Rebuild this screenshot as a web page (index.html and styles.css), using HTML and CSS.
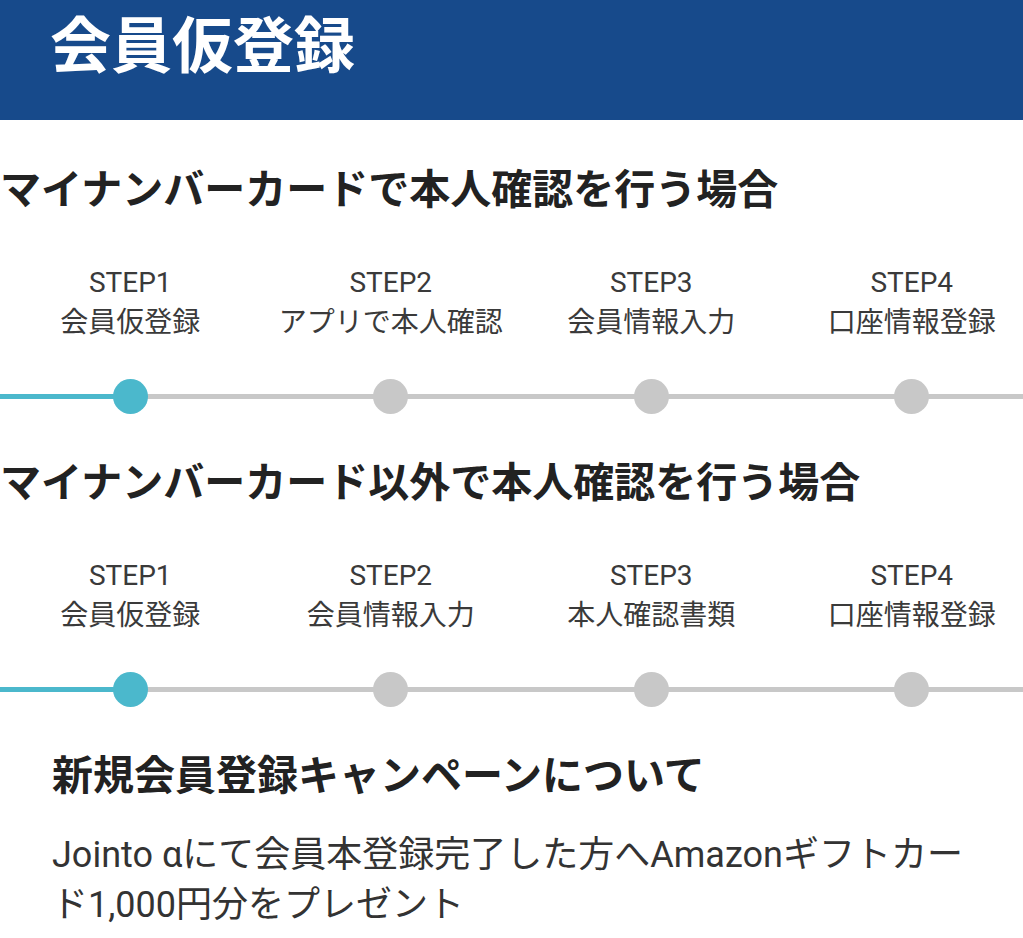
FILE: index.html
```html
<!DOCTYPE html>
<html lang="ja">
<head>
    <meta charset="UTF-8">
    <meta name="viewport" content="width=device-width, initial-scale=1.0">
    <title>会員仮登録</title>
    <link rel="stylesheet" href="styles.css">
</head>
<body>

    <div class="header">会員仮登録</div>

    <!-- My Number card flow -->
    <section class="flow">
        <h2>マイナンバーカードで本人確認を行う場合</h2>
        <ol class="steps">
            <li class="current"><span class="num">STEP1</span><span class="name">会員仮登録</span><span class="dot"></span></li>
            <li><span class="num">STEP2</span><span class="name">アプリで本人確認</span><span class="dot"></span></li>
            <li><span class="num">STEP3</span><span class="name">会員情報入力</span><span class="dot"></span></li>
            <li><span class="num">STEP4</span><span class="name">口座情報登録</span><span class="dot"></span></li>
        </ol>
    </section>

    <!-- Other ID flow -->
    <section class="flow">
        <h2>マイナンバーカード以外で本人確認を行う場合</h2>
        <ol class="steps">
            <li class="current"><span class="num">STEP1</span><span class="name">会員仮登録</span><span class="dot"></span></li>
            <li><span class="num">STEP2</span><span class="name">会員情報入力</span><span class="dot"></span></li>
            <li><span class="num">STEP3</span><span class="name">本人確認書類</span><span class="dot"></span></li>
            <li><span class="num">STEP4</span><span class="name">口座情報登録</span><span class="dot"></span></li>
        </ol>
    </section>

    <!-- Campaign -->
    <section class="campaign">
        <h3>新規会員登録キャンペーンについて</h3>
        <p>Jointo αにて会員本登録完了した方へAmazonギフトカード1,000円分をプレゼント</p>
    </section>

</body>
</html>
```

FILE: styles.css
```css
/* Base */
body {
    margin: 0;
    font-family: Roboto, "Noto Sans CJK JP", sans-serif;
    background: #fff;
    color: #222;
    overflow-x: hidden;
}

/* Header */
.header {
    background: #174a8b;
    color: #fff;
    font-size: 61px;
    font-weight: bold;
    line-height: 90px;
    height: 120px;
    padding: 2px 50px 0;
    box-sizing: border-box;
}

/* Step flows */
.flow h2 {
    margin: 0;
    font-size: 41px;
    font-weight: bold;
    line-height: 60px;
    white-space: nowrap;
}

.flow:first-of-type h2 {
    margin-top: 40px;
}

.steps {
    list-style: none;
    margin: 43px 0 39px;
    padding: 0;
    width: 1042px;
    display: grid;
    grid-template-columns: repeat(4, 1fr);
    background:
        linear-gradient(#4bb8cc, #4bb8cc) 0 calc(100% - 15px) / 130px 5px no-repeat,
        linear-gradient(#c8c8c8, #c8c8c8) 0 calc(100% - 15px) / 100% 5px no-repeat;
}

.steps li {
    display: flex;
    flex-direction: column;
    align-items: center;
    font-size: 28px;
    line-height: 40px;
    color: #3a3a3a;
}

.steps .dot {
    width: 35px;
    height: 35px;
    border-radius: 50%;
    background: #c8c8c8;
    margin-top: 36px;
}

.steps .current .dot {
    background: #4bb8cc;
}

/* Campaign */
.campaign {
    padding: 0 52px;
}

.campaign h3 {
    margin: 0;
    font-size: 41px;
    font-weight: bold;
    line-height: 60px;
}

.campaign p {
    margin: 24px 0 0;
    font-size: 36px;
    line-height: 50px;
    color: #333;
}
```
